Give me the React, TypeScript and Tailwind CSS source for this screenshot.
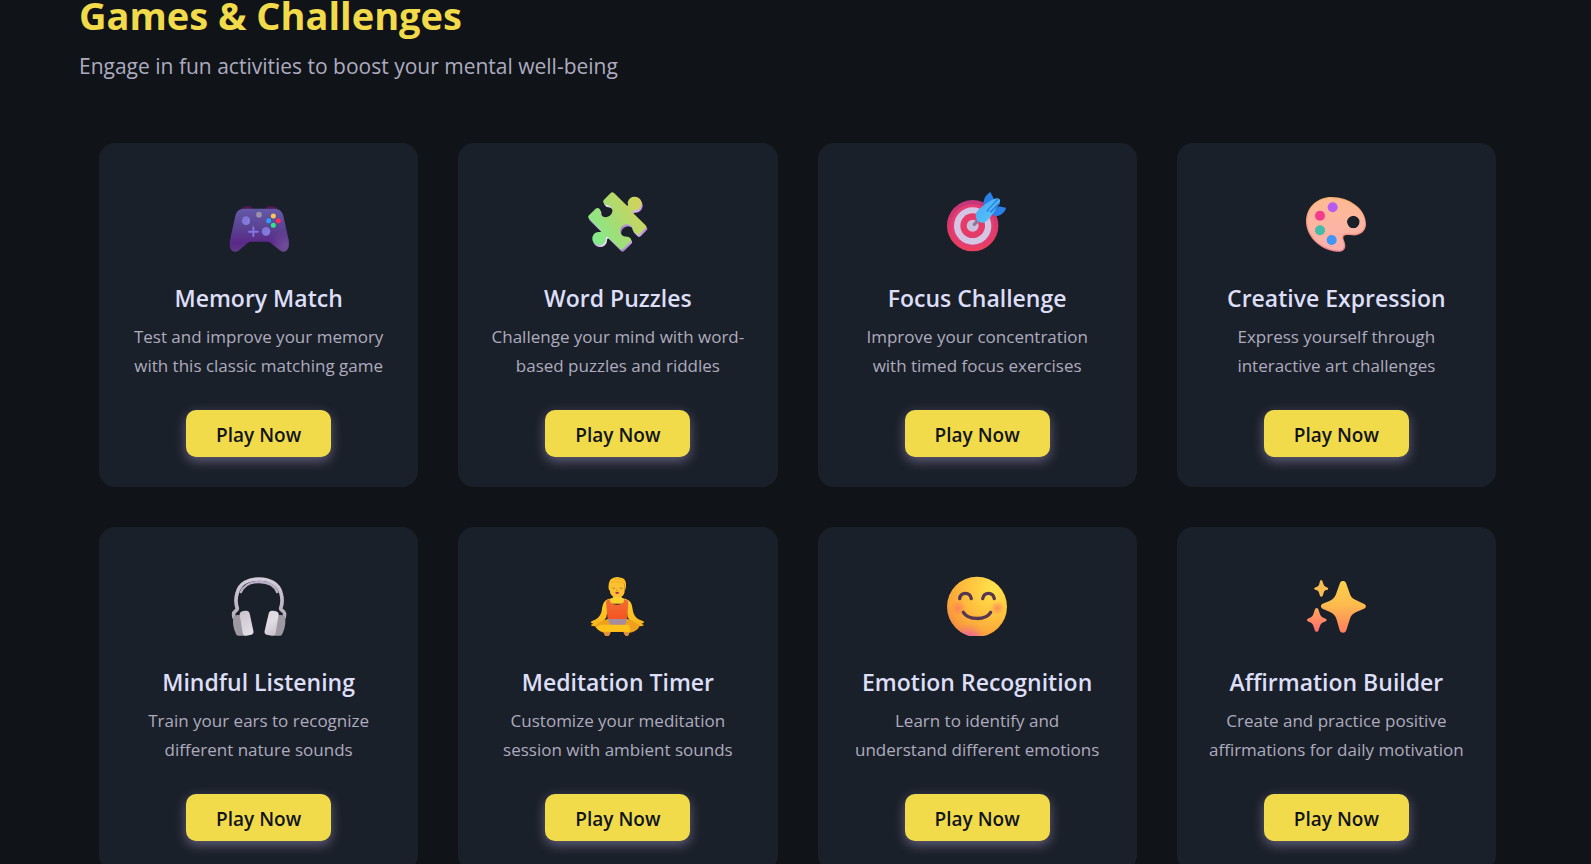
import type { ReactNode } from "react";

function Icon({ children }: { children: ReactNode }) {
  return (
    <svg viewBox="45 21 180 180" className="size-15" aria-hidden="true">
      {children}
    </svg>
  );
}

const controller = (
  <Icon>
    <defs>
      <linearGradient id="padBody" x1="0" y1="0" x2="0" y2="1">
        <stop offset="0" stopColor="#6359a8" />
        <stop offset="0.45" stopColor="#5b4292" />
        <stop offset="0.8" stopColor="#5a2888" />
        <stop offset="1" stopColor="#603a85" />
      </linearGradient>
      <radialGradient id="padGrip" gradientUnits="userSpaceOnUse" cx="216" cy="182" r="50">
        <stop offset="0" stopColor="#70509a" />
        <stop offset="1" stopColor="#70509a" stopOpacity="0" />
      </radialGradient>
      <linearGradient id="padStick" x1="0" y1="0" x2="1" y2="1">
        <stop offset="0" stopColor="#7472cf" />
        <stop offset="1" stopColor="#8c7fe6" />
      </linearGradient>
    </defs>
    <path d="M78 76C82 66 90 63 106 63C112 63 115 67 116 73ZM193 76C189 66 181 63 166 63C160 63 156 67 155 73Z" fill="#4d1850" />
    <path d="M92 71H180C196 71 204 78 208 92L224 166C227 188 220 199 209 200C203 200 199 197 194 193L170 174C167 171 164 170 160 170H111C107 170 104 171 101 174L77 194C72 198 68 200 62 200C50 198 45 187 48 166L64 92C68 78 76 71 92 71Z" fill="url(#padBody)" />
    <path d="M160 170C190 150 206 120 211 108L224 166C227 188 220 199 209 200C203 200 199 197 194 193L170 174Z" fill="url(#padGrip)" />
    <ellipse cx="96" cy="107" rx="12.5" ry="13" fill="url(#padStick)" />
    <ellipse cx="156" cy="139" rx="12.5" ry="13" fill="url(#padStick)" />
    <path d="M118 127V153M105 140H131" stroke="#8177df" strokeWidth="6" strokeLinecap="round" />
    <circle cx="135" cy="89" r="8.5" fill="#9b91ab" />
    <circle cx="178" cy="93" r="7.5" fill="#ffc554" />
    <circle cx="164" cy="107" r="7.5" fill="#2f9dfb" />
    <circle cx="193" cy="107" r="7.5" fill="#fb2d53" />
    <circle cx="178" cy="121" r="7.5" fill="#2fe584" />
  </Icon>
);

const puzzlePath =
  "M113 24Q118 19 123 24L163 63C168 60 163 56 164 52C167 40 176 34 186 35C198 36 206 44 206 56C205 68 196 77 184 77C178 77 176 80 180 84L217 120Q223 125 218 130L200 148Q195 152 190 147L181 138C177 134 179 130 177 126C172 118 162 116 154 120C144 124 139 136 143 145C147 154 154 155 161 155C166 155 168 156 172 160Q177 165 172 170L150 192Q146 197 141 192L106 157C102 152 99 155 99 161C98 172 90 180 79 180C67 180 58 172 58 161C58 149 67 140 79 141C86 142 86 138 82 134L48 101Q43 96 48 91L68 71Q74 66 80 72C84 76 80 83 85 90C92 99 104 98 112 91C119 84 121 73 114 66C109 61 104 62 99 60C96 59 94 56 92 54Q88 49 93 44Z";

const puzzle = (
  <Icon>
    <defs>
      <linearGradient id="pzFace" x1="0" y1="0.8" x2="1" y2="0.2">
        <stop offset="0" stopColor="#7ded8f" />
        <stop offset="0.48" stopColor="#a7dc73" />
        <stop offset="1" stopColor="#d9d257" />
      </linearGradient>
      <linearGradient id="pzEdge" x1="0" y1="0" x2="1" y2="0">
        <stop offset="0" stopColor="#ad7ddd" />
        <stop offset="0.3" stopColor="#eee4f8" />
        <stop offset="0.55" stopColor="#a879cf" />
        <stop offset="0.8" stopColor="#d8b4fa" />
        <stop offset="1" stopColor="#b37cdb" />
      </linearGradient>
    </defs>
    <path d={puzzlePath} transform="translate(3 6)" fill="url(#pzEdge)" />
    <path d={puzzlePath} fill="url(#pzFace)" />
  </Icon>
);

const target = (
  <Icon>
    <defs>
      <linearGradient id="tgRed" x1="0" y1="0" x2="0" y2="1">
        <stop offset="0" stopColor="#c2367c" />
        <stop offset="0.6" stopColor="#df3a68" />
        <stop offset="1" stopColor="#ed405f" />
      </linearGradient>
      <linearGradient id="tgDart" x1="0" y1="0" x2="1" y2="1">
        <stop offset="0" stopColor="#49aaf5" />
        <stop offset="1" stopColor="#55c8fa" />
      </linearGradient>
    </defs>
    <circle cx="122" cy="122" r="77" fill="url(#tgRed)" />
    <circle cx="122" cy="122" r="65" fill="#e43d72" />
    <circle cx="122" cy="123" r="56" fill="#d3c5e3" />
    <circle cx="122" cy="122" r="37" fill="#e63a69" />
    <circle cx="122" cy="122" r="18" fill="#cdbfdc" />
    <path d="M127 118L141 104" stroke="#8b7797" strokeWidth="10" strokeLinecap="round" />
    <path d="M155 60C153 42 163 28 175 21L190 50L171 72ZM180 84L200 64L222 68C220 82 205 94 187 93Z" fill="#2b80e8" />
    <path d="M132 85C138 73 175 43 195 40C205 40 206 49 202 54C194 71 169 108 157 113C144 116 127 106 132 85Z" fill="url(#tgDart)" />
    <path d="M167 77L196 45M177 80L201 55" stroke="#2a82df" strokeWidth="6" strokeLinecap="round" />
    <path d="M172 76L199 49" stroke="#59b8fa" strokeWidth="5" />
  </Icon>
);

const palette = (
  <Icon>
    <defs>
      <linearGradient id="plFace" x1="0" y1="0" x2="0" y2="1">
        <stop offset="0" stopColor="#fdba91" />
        <stop offset="0.5" stopColor="#fcb5a2" />
        <stop offset="1" stopColor="#fbb0ab" />
      </linearGradient>
      <linearGradient id="plEdge" x1="0" y1="0" x2="0" y2="1">
        <stop offset="0" stopColor="#f6ae65" />
        <stop offset="1" stopColor="#ec8494" />
      </linearGradient>
    </defs>
    <path fillRule="evenodd" d="M121 36C176 36 225 72 225 117C225 139 208 153 183 151C170 150 158 149 157 157C156 164 164 173 163 184C162 197 151 202 137 200C84 195 45 153 45 109C45 66 80 36 121 36ZM187 92A19 19 0 1 0 187 130A19 19 0 1 0 187 92Z" fill="url(#plEdge)" />
    <path fillRule="evenodd" d="M121 39C173 39 222 73 222 114C222 134 207 148 184 147C168 145 153 144 153 155C153 164 160 173 159 182C158 194 149 197 137 196C86 190 49 151 49 108C49 67 82 39 121 39ZM187 92A19 19 0 1 0 187 130A19 19 0 1 0 187 92Z" fill="url(#plFace)" />
    <circle cx="125" cy="67" r="15" fill="#b65df0" />
    <circle cx="87" cy="92" r="15" fill="#f53b8b" />
    <circle cx="87" cy="136" r="15" fill="#43bba9" />
    <circle cx="122" cy="165" r="15" fill="#3f96f6" />
  </Icon>
);

const headphones = (
  <Icon>
    <defs>
      <linearGradient id="hpBand" x1="0" y1="0" x2="0" y2="1">
        <stop offset="0" stopColor="#d3ccd9" />
        <stop offset="1" stopColor="#b5acb9" />
      </linearGradient>
      <linearGradient id="hpPad" x1="0" y1="0" x2="1" y2="1">
        <stop offset="0" stopColor="#c9c3cd" />
        <stop offset="0.6" stopColor="#e3dee6" />
        <stop offset="1" stopColor="#c6bec9" />
      </linearGradient>
    </defs>
    <path d="M79 72C88 49 107 39 135 39C163 39 183 49 191 72" fill="none" stroke="#b9aec7" strokeWidth="7" />
    <path d="M60 148L59 136C58 126 70 125 70 119C65 104 65 85 70 71C77 43 103 30 135 30C168 30 194 45 201 72C205 86 205 105 200 119C200 125 212 126 212 134L210 148" fill="none" stroke="url(#hpBand)" strokeWidth="11" />
    <path d="M58 143C66 137 77 137 83 140L90 200H72Q67 200 65 193C58 176 55 159 58 143ZM213 143C205 137 194 137 188 140L181 200H199Q204 200 206 193C213 176 216 159 213 143Z" fill="#9e98a3" />
    <path d="M77 137C76 129 83 125 95 125C104 124 107 130 108 138L118 185C120 194 116 197 108 198L98 200Q88 203 86 191ZM194 137C195 129 188 125 176 125C167 124 164 130 163 138L152 185C150 194 154 197 162 198L173 200Q183 203 185 191Z" fill="url(#hpPad)" />
  </Icon>
);

const meditation = (
  <Icon>
    <defs>
      <linearGradient id="mdSkin" x1="0" y1="0" x2="0" y2="1">
        <stop offset="0" stopColor="#ffd432" />
        <stop offset="1" stopColor="#f8b51c" />
      </linearGradient>
      <linearGradient id="mdShirt" x1="0" y1="0" x2="0" y2="1">
        <stop offset="0" stopColor="#f36e35" />
        <stop offset="1" stopColor="#f45323" />
      </linearGradient>
    </defs>
    <path d="M104 91C108 89 119 89 121 84V76H145V84C147 89 159 89 163 92C176 97 178 112 180 127C183 142 191 150 211 157C216 160 211 164 205 164L213 168C208 173 199 171 194 171C184 170 173 158 164 145L158 104H107L100 145C91 158 81 170 71 171C66 171 57 173 53 168L61 164C55 164 51 160 56 157C74 150 82 142 86 127C88 112 90 97 104 91Z" fill="url(#mdSkin)" />
    <path d="M111 91C110 103 118 107 132 107C146 107 154 103 153 91C160 91 165 94 166 100L162 151H104L99 100C100 94 105 91 111 91Z" fill="url(#mdShirt)" />
    <path d="M104 150H162C176 152 191 161 200 170C196 183 180 190 169 191C168 202 160 204 155 197L151 189H113C111 202 99 207 95 198L92 191C79 187 69 178 66 171C78 161 92 152 104 150Z" fill="#efa11d" />
    <path d="M104 150H162L157 168H112Z" fill="#a58d9c" />
    <path d="M82 167H166Q174 177 169 191L151 188H95C82 188 73 181 69 173Z" fill="#ffc21d" />
    <path d="M93 191C99 191 105 190 111 190C110 202 101 205 96 199ZM153 189L168 190C168 201 161 203 156 197Z" fill="#e48b42" />
    <path d="M111 35H155V66C155 79 145 86 133 86C120 86 111 78 111 66Z" fill="#fcc133" />
    <path d="M108 63C105 51 107 29 122 26C130 23 137 24 143 26C157 27 160 40 159 51C159 58 157 62 155 64V44C143 47 132 36 126 39C119 43 112 41 112 49V66Z" fill="#ffc328" />
    <path d="M112 42C124 33 143 41 155 43M125 30C138 28 150 32 154 38" fill="none" stroke="#e89f24" strokeWidth="2" />
    <path d="M118 57Q122 60 126 57M140 57Q145 60 149 57" fill="none" stroke="#ab6a2c" strokeWidth="2.5" />
    <path d="M131 58L129 65H136" fill="none" stroke="#de8e22" strokeWidth="2" />
    <path d="M126 71Q132 67 139 71Q133 78 126 71Z" fill="#9c234c" />
  </Icon>
);

const smile = (
  <Icon>
    <defs>
      <radialGradient id="smFace" gradientUnits="userSpaceOnUse" cx="188" cy="58" r="175">
        <stop offset="0" stopColor="#ffe34d" />
        <stop offset="0.45" stopColor="#ffc43f" />
        <stop offset="0.8" stopColor="#fba53a" />
        <stop offset="1" stopColor="#f28448" />
      </radialGradient>
      <radialGradient id="smBase" gradientUnits="userSpaceOnUse" cx="110" cy="218" r="58">
        <stop offset="0" stopColor="#f45bad" />
        <stop offset="0.45" stopColor="#f065a0" stopOpacity="0.7" />
        <stop offset="1" stopColor="#f28a58" stopOpacity="0" />
      </radialGradient>
      <radialGradient id="smCheek">
        <stop offset="0" stopColor="#ff7262" stopOpacity="0.7" />
        <stop offset="1" stopColor="#ff7262" stopOpacity="0" />
      </radialGradient>
    </defs>
    <circle cx="135" cy="113" r="90" fill="url(#smFace)" />
    <circle cx="135" cy="113" r="90" fill="url(#smBase)" />
    <circle cx="79" cy="117" r="23" fill="url(#smCheek)" />
    <circle cx="196" cy="117" r="21" fill="url(#smCheek)" />
    <path d="M83 89C86 68 114 68 118 89M152 89C156 68 183 68 187 89M94 130C109 154 161 155 176 130" fill="none" stroke="#573650" strokeWidth="10" strokeLinecap="round" />
  </Icon>
);

const sparkles = (
  <Icon>
    <defs>
      <linearGradient id="spBig" x1="0" y1="0" x2="0" y2="1">
        <stop offset="0" stopColor="#fbd04c" />
        <stop offset="0.45" stopColor="#fdbc4d" />
        <stop offset="1" stopColor="#ff7d60" />
      </linearGradient>
      <linearGradient id="spSmall" x1="0" y1="0" x2="0" y2="1">
        <stop offset="0" stopColor="#ffa858" />
        <stop offset="1" stopColor="#ff6b71" />
      </linearGradient>
    </defs>
    <path d="M147 42C150 34 162 34 165 42L175 70C179 84 185 89 196 94L218 104C227 108 227 115 219 119L196 129C184 135 180 140 176 152L166 184C163 194 149 194 146 184L137 152C134 140 127 134 117 129L95 119C88 115 88 108 95 104L117 95C128 90 133 83 137 70Z" fill="url(#spBig)" />
    <path d="M87 36Q90 30 94 36L98 47Q100 52 104 53L110 56Q114 59 110 62L103 64Q99 67 98 71L95 81Q91 86 87 81L84 71Q83 66 78 64L72 62Q67 59 71 56L78 53Q82 51 84 47Z" fill="#f8bd52" />
    <path d="M72 121Q77 113 82 121L87 136Q89 142 94 145L104 149Q110 153 104 157L94 161Q89 164 87 170L82 185Q77 192 72 185L67 170Q65 164 60 161L50 157Q45 153 50 149L60 145Q65 142 67 136Z" fill="url(#spSmall)" />
  </Icon>
);

const games = [
  { title: "Memory Match", text: "Test and improve your memory with this classic matching game", icon: controller },
  { title: "Word Puzzles", text: "Challenge your mind with word-based puzzles and riddles", icon: puzzle },
  { title: "Focus Challenge", text: "Improve your concentration with timed focus exercises", icon: target },
  { title: "Creative Expression", text: "Express yourself through interactive art challenges", icon: palette },
  { title: "Mindful Listening", text: "Train your ears to recognize different nature sounds", icon: headphones },
  { title: "Meditation Timer", text: "Customize your meditation session with ambient sounds", icon: meditation },
  { title: "Emotion Recognition", text: "Learn to identify and understand different emotions", icon: smile },
  { title: "Affirmation Builder", text: "Create and practice positive affirmations for daily motivation", icon: sparkles },
];

export default function App() {
  return (
    <main className="min-h-screen bg-[#101418] pr-[75px] pb-10 pl-[79px] font-['Open_Sans','Noto_Sans',sans-serif]">
      <header>
        <h1 className="text-[38px] leading-[31px] font-bold text-[#f2db4b]">Games &amp; Challenges</h1>
        <p className="mt-[17px] text-[21px] leading-9 text-[#aeabc0]">
          Engage in fun activities to boost your mental well-being
        </p>
      </header>
      <section className="mt-[59px] grid grid-cols-1 gap-10 px-5 sm:grid-cols-2 lg:grid-cols-4">
        {games.map((game) => (
          <article
            key={game.title}
            className="flex flex-col items-center rounded-2xl bg-[#1a2029] px-[30px] pt-[49px] pb-[30px] text-center"
          >
            {game.icon}
            <h2 className="mt-[29px] text-[23px] leading-[35px] font-semibold text-[#dddef7]">{game.title}</h2>
            <p className="mt-[6px] text-[17px] leading-[29px] text-[#aeabbf]">{game.text}</p>
            <button
              type="button"
              className="mt-[30px] h-[47px] rounded-[10px] bg-[#f2db4b] px-[30px] pt-[3px] text-[19px] font-semibold text-[#101418] shadow-[0_4px_12px_rgba(190,170,225,0.45)]"
            >
              Play Now
            </button>
          </article>
        ))}
      </section>
    </main>
  );
}
